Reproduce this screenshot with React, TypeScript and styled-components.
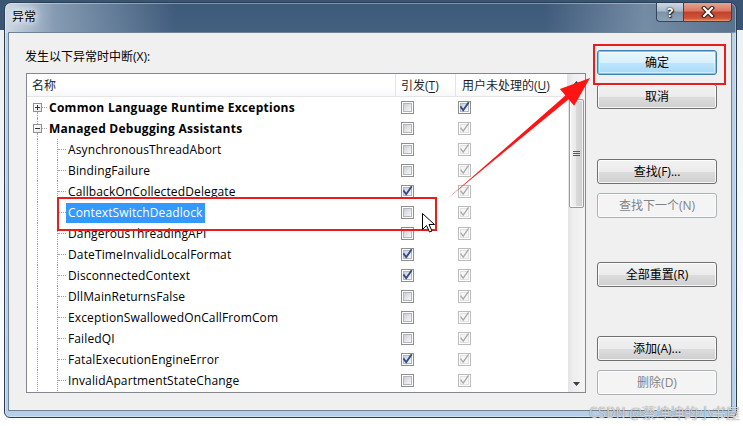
import React from 'react';
import styled, { createGlobalStyle, css } from 'styled-components';

const UI_FONT = `'Open Sans', 'Noto Sans CJK SC', sans-serif`;

const GlobalStyle = createGlobalStyle`
  html, body {
    margin: 0;
    padding: 0;
  }
  body {
    width: 743px;
    height: 426px;
    overflow: hidden;
    background: #ffffff;
    font-family: ${UI_FONT};
    font-size: 12px;
    color: #000;
  }
`;

const Desktop = styled.div`
    position: relative;
    width: 743px;
    height: 426px;
    box-sizing: border-box;
    padding: 2px 0 0 4px;
    background: linear-gradient(to bottom, #3a5474 0, #3a5474 30px, #eef0f2 30px, #ffffff 100%);
    overflow: hidden;
`;

const Window = styled.div`
    width: 733px;
    height: 416px;
    box-sizing: border-box;
    display: flex;
    flex-direction: column;
    padding: 0 4px 6px 3px;
    border: 1px solid #2c3e54;
    border-radius: 7px 7px 6px 6px;
    background:
        linear-gradient(to right, rgba(220, 230, 240, 0.9) 0, rgba(170, 188, 208, 0.65) 50px, rgba(70, 95, 125, 0) 170px, rgba(70, 95, 125, 0) 540px, rgba(160, 178, 198, 0.55) 640px, rgba(130, 150, 172, 0.35) 100%) top / 100% 30px no-repeat,
        linear-gradient(to bottom, #3e5a7b 0, #44607f 29px, #bcd0e4 30px, #b6cfe9 100%);
    box-shadow: inset 0 0 0 1px rgba(255, 255, 255, 0.35);
`;

const TitleBar = styled.div`
    height: 29px;
    flex: none;
    display: flex;
    align-items: flex-start;
`;

const TitleText = styled.span`
    margin: 6px 0 0 4px;
    line-height: 16px;
    font-size: 12px;
    color: #000;
    text-shadow: 0 0 6px #fff, 0 0 10px #fff, 0 0 14px rgba(255, 255, 255, 0.8);
`;

const CaptionGroup = styled.div`
    margin-left: auto;
    display: flex;
    height: 19px;
`;

const CaptionButton = styled.div<{ $close?: boolean }>`
    width: ${props => props.$close ? 48 : 28}px;
    height: 19px;
    box-sizing: border-box;
    display: grid;
    place-items: center;
    border: 1px solid #33465c;
    border-top: none;
    color: #fff;
    font-weight: 700;
    font-size: 13px;
    line-height: 1;
    text-shadow: 0 0 1px #000, 0 0 2px #1a2533, 1px 1px 1px #1a2533;
    ${props => props.$close ? css`
        border-left: none;
        border-radius: 0 0 4px 0;
        background: linear-gradient(to bottom, #e8a493 0%, #d97561 45%, #c1412b 50%, #cf553a 85%, #e39a78 100%);
    ` : css`
        border-radius: 0 0 0 4px;
        background: linear-gradient(to bottom, #ccd7e2 0%, #a9b9ca 45%, #7d92a8 50%, #8fa3b8 100%);
    `}
`;

const Client = styled.div`
    flex: 1;
    display: flex;
    border: 1px solid #6f8296;
    background: #f0f0f0;
`;

const LeftColumn = styled.div`
    display: flex;
    flex-direction: column;
    padding-left: 16px;
`;

const FieldLabel = styled.div`
    margin-top: 16px;
    line-height: 16px;
    font-size: 12px;
    color: #000;
`;

const ListBox = styled.div`
    margin: 8px 0 0 1px;
    width: 560px;
    height: 320px;
    box-sizing: border-box;
    border: 1px solid #828790;
    background: #fff;
    display: flex;
`;

const ListMain = styled.div`
    width: 541px;
    display: flex;
    flex-direction: column;
`;

const HeaderRow = styled.div`
    display: flex;
    height: 22px;
    border-bottom: 1px solid #e5e5e5;
    background: linear-gradient(#ffffff 0, #ffffff 60%, #f7f8fa 100%);
`;

const HeaderCell = styled.div<{ $w: number; $pad: number }>`
    width: ${props => props.$w}px;
    box-sizing: border-box;
    padding-left: ${props => props.$pad}px;
    display: flex;
    align-items: center;
    border-right: 1px solid #e5e5e5;
    color: #1e1e1e;
    white-space: nowrap;
`;

const Accel = styled.span`
    text-decoration: underline;
    text-underline-offset: 2px;
`;

const Row = styled.div`
    display: flex;
    height: 21px;
`;

const NameCell = styled.div`
    width: 369px;
    display: flex;
    align-items: stretch;
`;

const RootGutter = styled.div`
    display: flex;
    padding-left: 6px;
`;

const ExpanderColumn = styled.div`
    width: 9px;
    display: flex;
    flex-direction: column;
    align-items: flex-start;
`;

const VLine = styled.span<{ $hidden?: boolean }>`
    flex: 1;
    width: 0;
    margin-left: 4px;
    border-left: 1px dotted ${props => props.$hidden ? 'transparent' : '#a0a0a0'};
`;

const Expander = styled.span`
    flex: none;
    width: 9px;
    height: 9px;
    box-sizing: border-box;
    border: 1px solid #919191;
    background: linear-gradient(135deg, #ffffff 0%, #e6e6e6 100%);
    display: grid;
    place-items: center;
`;

const HLine = styled.span<{ $w: number }>`
    align-self: center;
    width: ${props => props.$w}px;
    height: 0;
    border-top: 1px dotted #a0a0a0;
`;

const Guide = styled.div<{ $w: number }>`
    width: ${props => props.$w}px;
    display: flex;
`;

const GuideLine = styled.span`
    width: 0;
    margin-left: 10px;
    border-left: 1px dotted #a0a0a0;
`;

const ItemLabel = styled.span<{ $bold?: boolean; $selected?: boolean }>`
    align-self: center;
    padding: 0 2px;
    line-height: 20px;
    white-space: nowrap;
    font-weight: ${props => props.$bold ? 700 : 400};
    letter-spacing: ${props => props.$bold ? 0.26 : 0.13}px;
    color: ${props => props.$selected ? '#fff' : '#000'};
    background: ${props => props.$selected ? '#3399ff' : 'transparent'};
`;

const CheckCell = styled.div<{ $w: number; $pad: number }>`
    width: ${props => props.$w}px;
    box-sizing: border-box;
    padding-left: ${props => props.$pad}px;
    display: flex;
    align-items: center;
`;

const CheckBox = styled.span<{ $disabled?: boolean }>`
    width: 13px;
    height: 13px;
    box-sizing: border-box;
    border: 1px solid ${props => props.$disabled ? '#bcbcbc' : '#8e8f8f'};
    background: #fff;
    display: grid;
    place-items: center;
`;

const CheckFace = styled.span<{ $disabled?: boolean }>`
    width: 9px;
    height: 9px;
    box-sizing: border-box;
    border: 1px solid ${props => props.$disabled ? '#e2e2e2' : '#b3b6ba'};
    background: ${props => props.$disabled ? '#f6f6f6' : 'linear-gradient(135deg, #cbcfd5 0%, #e4e6e9 55%, #f7f7f7 100%)'};
    display: grid;
    place-items: center;
`;

const ScrollBar = styled.div`
    width: 17px;
    display: flex;
    flex-direction: column;
    background: linear-gradient(to right, #e4e4e4 0, #eeeeee 30%, #f4f4f4 100%);
`;

const ScrollArrow = styled.div`
    flex: none;
    height: 17px;
    display: grid;
    place-items: center;
`;

const ScrollTrack = styled.div`
    flex: 1;
    display: flex;
    flex-direction: column;
    align-items: center;
`;

const ScrollThumb = styled.div`
    margin-top: 8px;
    width: 15px;
    height: 109px;
    box-sizing: border-box;
    border: 1px solid #9a9a9a;
    border-radius: 2px;
    background: linear-gradient(to right, #f4f4f4 0, #e9e9e9 45%, #d9d9d9 50%, #d0d0d0 100%);
    box-shadow: inset 0 0 0 1px rgba(255, 255, 255, 0.7);
    display: grid;
    place-items: center;
`;

const RightColumn = styled.div`
    margin-left: 11px;
    padding-top: 17px;
    display: flex;
    flex-direction: column;
`;

const DialogButton = styled.button<{ $gap?: number; $primary?: boolean }>`
    width: 120px;
    height: 25px;
    margin: ${props => props.$gap ?? 0}px 0 0 0;
    box-sizing: border-box;
    padding: 0;
    font-family: ${UI_FONT};
    font-size: 12px;
    line-height: 23px;
    color: #000;
    border: 1px solid #707070;
    border-radius: 3px;
    background: linear-gradient(to bottom, #f2f2f2 0%, #ebebeb 50%, #dddddd 51%, #cfcfcf 100%);
    box-shadow: inset 0 0 0 1px rgba(255, 255, 255, 0.8);
    ${props => props.$primary && css`
        border-color: #3c7fb1;
        background: linear-gradient(to bottom, #eaf6fd 0%, #d9f0fc 50%, #bee6fd 51%, #a7d9f5 100%);
        box-shadow: inset 0 0 0 1px #6fcbf5, inset 0 0 0 2px rgba(255, 255, 255, 0.45);
    `}
    &:disabled {
        border-color: #adb2b5;
        background: #f4f4f4;
        color: #838383;
        box-shadow: inset 0 0 0 1px #fcfcfc;
    }
`;

const Annotations = styled.svg`
    position: absolute;
    left: 0;
    top: 0;
    width: 743px;
    height: 426px;
    pointer-events: none;
`;

const Watermark = styled.div`
    position: absolute;
    left: 589px;
    top: 404px;
    font-family: 'Noto Sans CJK SC', sans-serif;
    font-size: 14px;
    line-height: 17px;
    color: rgba(255, 255, 255, 0.75);
    text-shadow: 0 0 1px rgba(60, 60, 60, 0.9);
    white-space: nowrap;
`;

type Item = {
    name: string,
    level: 0 | 1,
    expanded?: boolean,
    first?: boolean,
    thrown: boolean,
    userLive?: boolean,
    selected?: boolean,
};

const items: Item[] = [
    { name: 'Common Language Runtime Exceptions', level: 0, expanded: false, first: true, thrown: false, userLive: true },
    { name: 'Managed Debugging Assistants', level: 0, expanded: true, thrown: false },
    { name: 'AsynchronousThreadAbort', level: 1, thrown: false },
    { name: 'BindingFailure', level: 1, thrown: false },
    { name: 'CallbackOnCollectedDelegate', level: 1, thrown: true },
    { name: 'ContextSwitchDeadlock', level: 1, thrown: false, selected: true },
    { name: 'DangerousThreadingAPI', level: 1, thrown: false },
    { name: 'DateTimeInvalidLocalFormat', level: 1, thrown: true },
    { name: 'DisconnectedContext', level: 1, thrown: true },
    { name: 'DllMainReturnsFalse', level: 1, thrown: false },
    { name: 'ExceptionSwallowedOnCallFromCom', level: 1, thrown: false },
    { name: 'FailedQI', level: 1, thrown: false },
    { name: 'FatalExecutionEngineError', level: 1, thrown: true },
    { name: 'InvalidApartmentStateChange', level: 1, thrown: false },
];

const Check = ({ checked, disabled }: { checked: boolean, disabled?: boolean }) => (
    <CheckBox $disabled={disabled}>
        <CheckFace $disabled={disabled}>
            {checked && (
                <svg width="11" height="11" viewBox="0 0 11 11" style={{ margin: -2, overflow: 'visible' }}>
                    <path d="M2 5.2 L4.2 8.2 L9.2 1" fill="none" stroke={disabled ? '#a8a8a8' : '#2e4a8e'} strokeWidth={disabled ? 1.3 : 1.9} strokeLinecap="square" />
                </svg>
            )}
        </CheckFace>
    </CheckBox>
);

const TreeName = ({ item }: { item: Item }) => {
    if (item.level === 0) {
        return (
            <NameCell>
                <RootGutter>
                    <ExpanderColumn>
                        <VLine $hidden={item.first} />
                        <Expander>
                            <svg width="7" height="7" viewBox="0 0 7 7">
                                <path d="M1 3.5 H6" stroke="#333" strokeWidth="1" />
                                {!item.expanded && <path d="M3.5 1 V6" stroke="#333" strokeWidth="1" />}
                            </svg>
                        </Expander>
                        <VLine />
                    </ExpanderColumn>
                    <HLine $w={5} />
                </RootGutter>
                <ItemLabel $bold>{item.name}</ItemLabel>
            </NameCell>
        );
    }
    return (
        <NameCell>
            <Guide $w={20}><GuideLine /></Guide>
            <Guide $w={19}>
                <GuideLine />
                <HLine $w={8} />
            </Guide>
            <ItemLabel $selected={item.selected}>{item.name}</ItemLabel>
        </NameCell>
    );
};

const App = () => {
    return (
        <Desktop>
            <GlobalStyle />
            <Window>
                <TitleBar>
                    <TitleText>异常</TitleText>
                    <CaptionGroup>
                        <CaptionButton>?</CaptionButton>
                        <CaptionButton $close>
                            <svg width="16" height="12" viewBox="0 0 16 12">
                                <path d="M4 2 L12 10 M12 2 L4 10" stroke="#2a1a18" strokeWidth="4.2" strokeLinecap="square" />
                                <path d="M4 2 L12 10 M12 2 L4 10" stroke="#ffffff" strokeWidth="2.2" strokeLinecap="square" />
                            </svg>
                        </CaptionButton>
                    </CaptionGroup>
                </TitleBar>
                <Client>
                    <LeftColumn>
                        <FieldLabel>发生以下异常时中断(X):</FieldLabel>
                        <ListBox>
                            <ListMain>
                                <HeaderRow>
                                    <HeaderCell $w={369} $pad={5}>名称</HeaderCell>
                                    <HeaderCell $w={60} $pad={5}>引发(<Accel>T</Accel>)</HeaderCell>
                                    <HeaderCell $w={112} $pad={6}>用户未处理的(<Accel>U</Accel>)</HeaderCell>
                                </HeaderRow>
                                {items.map(item => (
                                    <Row key={item.name}>
                                        <TreeName item={item} />
                                        <CheckCell $w={60} $pad={5}>
                                            <Check checked={item.thrown} />
                                        </CheckCell>
                                        <CheckCell $w={112} $pad={2}>
                                            <Check checked disabled={!item.userLive} />
                                        </CheckCell>
                                    </Row>
                                ))}
                            </ListMain>
                            <ScrollBar>
                                <ScrollArrow>
                                    <svg width="7" height="4" viewBox="0 0 7 4"><path d="M0 4 L3.5 0 L7 4 Z" fill="#3c3c3c" /></svg>
                                </ScrollArrow>
                                <ScrollTrack>
                                    <ScrollThumb>
                                        <svg width="7" height="6" viewBox="0 0 7 6">
                                            <path d="M0 0.5 H7 M0 2.5 H7 M0 4.5 H7" stroke="#5c5c5c" strokeWidth="1" />
                                        </svg>
                                    </ScrollThumb>
                                </ScrollTrack>
                                <ScrollArrow>
                                    <svg width="7" height="4" viewBox="0 0 7 4"><path d="M0 0 L7 0 L3.5 4 Z" fill="#3c3c3c" /></svg>
                                </ScrollArrow>
                            </ScrollBar>
                        </ListBox>
                    </LeftColumn>
                    <RightColumn>
                        <DialogButton $primary>确定</DialogButton>
                        <DialogButton $gap={9}>取消</DialogButton>
                        <DialogButton $gap={50}>查找(F)...</DialogButton>
                        <DialogButton $gap={9} disabled>查找下一个(N)</DialogButton>
                        <DialogButton $gap={44}>全部重置(R)</DialogButton>
                        <DialogButton $gap={49}>添加(A)...</DialogButton>
                        <DialogButton $gap={9} disabled>删除(D)</DialogButton>
                    </RightColumn>
                </Client>
            </Window>
            <Annotations viewBox="0 0 743 426">
                <rect x="58" y="198" width="378" height="32" fill="none" stroke="#ea1c1c" strokeWidth="2" />
                <rect x="594" y="45" width="131" height="39" fill="none" stroke="#ea1c1c" strokeWidth="2" />
                <polygon points="447,199 565.4,95.4 559.9,88.9 590,78 574.1,105.7 568.6,99.2" fill="#ff1414" />
                <path d="M422.5 213.5 L422.5 229.5 L426.5 225.5 L429.5 232 L432 231 L429 224.5 L434.5 224.5 Z" fill="#fff" stroke="#000" strokeWidth="1" strokeLinejoin="miter" />
            </Annotations>
            <Watermark>CSDN @蔡坤坤的小书屋</Watermark>
        </Desktop>
    );
};

export default App;
